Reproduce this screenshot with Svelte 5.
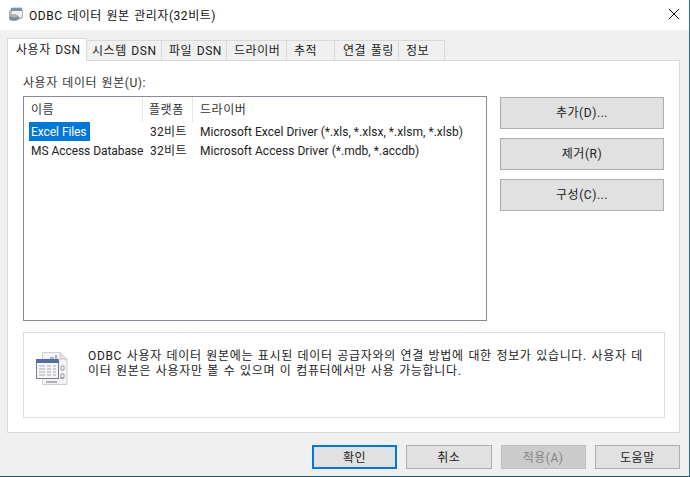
<script lang="ts">
	const tabs = [
		{ label: '사용자 DSN', w: 80, pad: 8 },
		{ label: '시스템 DSN', w: 75, pad: 5 },
		{ label: '파일 DSN', w: 65, pad: 7 },
		{ label: '드라이버', w: 60, pad: 7 },
		{ label: '추적', w: 48, pad: 7 },
		{ label: '연결 풀링', w: 64, pad: 8 },
		{ label: '정보', w: 46, pad: 7 }
	];
	const rows = [
		{ name: 'Excel Files', bits: '32비트', driver: 'Microsoft Excel Driver (*.xls, *.xlsx, *.xlsm, *.xlsb)', selected: true },
		{ name: 'MS Access Database', bits: '32비트', driver: 'Microsoft Access Driver (*.mdb, *.accdb)', selected: false }
	];
	const footer = [
		{ label: '확인', cls: 'primary' },
		{ label: '취소', cls: '' },
		{ label: '적용(A)', cls: 'disabled' },
		{ label: '도움말', cls: '' }
	];
</script>

<div class="window">
	<div class="titlebar">
		<svg class="appicon" width="16" height="16" viewBox="0 0 16 16">
			<path d="M1 5 L4 1.5 H14 L15 5 V12 L8 15 H2 L1 13 Z" fill="#b4b9bd" />
			<rect x="3" y="2" width="11" height="3" fill="#7f95ab" />
			<rect x="4" y="5" width="10" height="6" fill="#eef0f2" />
			<ellipse cx="6" cy="11.5" rx="5" ry="3" fill="#7f878d" />
			<ellipse cx="6" cy="10" rx="4" ry="1.6" fill="#a9b0b5" />
		</svg>
		<span class="title">ODBC 데이터 원본 관리자(32비트)</span>
		<svg class="close" width="10" height="10" viewBox="0 0 10 10">
			<path d="M0 0 L10 10 M10 0 L0 10" stroke="#111" stroke-width="1" fill="none" />
		</svg>
	</div>

	<div class="body">
		<div class="tabs">
			{#each tabs as tab, i}
				<div class="tab" class:active={i === 0} style="width: {tab.w}px; padding-left: {tab.pad}px">{tab.label}</div>
			{/each}
		</div>

		<div class="panel">
			<div class="label">사용자 데이터 원본(U):</div>
			<div class="main">
				<div class="list">
					<div class="head">
						<div class="col c1">이름</div>
						<div class="col c2">플랫폼</div>
						<div class="col c3">드라이버</div>
					</div>
					{#each rows as row}
						<div class="row">
							<div class="c1"><span class="name" class:selected={row.selected}>{row.name}</span></div>
							<div class="c2 cell">{row.bits}</div>
							<div class="c3 cell">{row.driver}</div>
						</div>
					{/each}
				</div>
				<div class="side">
					<div class="btn">추가(D)...</div>
					<div class="btn">제거(R)</div>
					<div class="btn">구성(C)...</div>
				</div>
			</div>
			<div class="info">
				<svg class="infoicon" width="32" height="34" viewBox="0 0 32 34">
					<path d="M6.5 0.5 H24 L31 7 V32.5 H6.5 Z" fill="#f3f3f5" stroke="#d0d0d4" />
					<path d="M24 0.5 V7 H31" fill="#e2e2e6" stroke="#c6c6cc" />
					<path d="M14 6 H18 M20 3 V7 M24 26 H28 M10 30 H21" stroke="#9a9aa2" stroke-width="1.5" />
					<path d="M25 14 H28 V18 H25 Z M25 22 H28 V26 H25 Z" fill="none" stroke="#9a9eaa" />
					<rect x="0.5" y="7.5" width="22" height="19" fill="#f6f6f8" stroke="#787c88" />
					<rect x="0" y="7" width="23" height="4" fill="#4f6fa8" />
					<path d="M3 14 H9 M11 14 H15 M17 14 H20 M3 17 H9 M11 17 H15 M17 17 H20 M3 20 H9 M11 20 H15 M17 20 H20 M3 23 H9 M11 23 H15 M17 23 H20" stroke="#a4a8b2" />
				</svg>
				<p>ODBC 사용자 데이터 원본에는 표시된 데이터 공급자와의 연결 방법에 대한 정보가 있습니다. 사용자 데이터 원본은 사용자만 볼 수 있으며 이 컴퓨터에서만 사용 가능합니다.</p>
			</div>
		</div>

		<div class="footer">
			{#each footer as b}
				<div class="btn small {b.cls}">{b.label}</div>
			{/each}
		</div>
	</div>
</div>

<style>
	:global(body) {
		margin: 0;
		background: #f0f0f0;
	}

	.window {
		width: 690px;
		height: 477px;
		box-sizing: border-box;
		display: flex;
		flex-direction: column;
		border-right: 1px solid #2f6f8a;
		border-bottom: 1px solid #17566e;
		font-family: Roboto, 'Noto Sans CJK KR', sans-serif;
		font-size: 12px;
		letter-spacing: 0.55px;
		word-spacing: 1px;
		color: #1a1a1a;
		background: #f0f0f0;
		overflow: hidden;
	}

	.titlebar {
		box-sizing: border-box;
		height: 30px;
		flex: none;
		background: #fff;
		display: flex;
		align-items: center;
		padding: 0 10px 2px 8px;
	}

	.appicon {
		margin-right: 5px;
	}

	.title {
		flex: 1;
		color: #111;
	}

	.body {
		flex: 1;
		display: flex;
		flex-direction: column;
		padding: 8px 9px 0 7px;
		min-height: 0;
	}

	.tabs {
		display: flex;
		align-items: flex-end;
		height: 22px;
		flex: none;
		position: relative;
		z-index: 1;
	}

	.tab {
		box-sizing: border-box;
		height: 20px;
		border: 1px solid #d9d9d9;
		border-left: none;
		border-bottom: none;
		background: #f0f0f0;
		line-height: 21px;
		color: #1a1a1a;
		white-space: nowrap;
	}

	.tab.active {
		height: 23px;
		margin-bottom: -1px;
		background: #fff;
		border-left: 1px solid #d9d9d9;
		line-height: 22px;
	}

	.panel {
		box-sizing: border-box;
		height: 373px;
		flex: none;
		background: #fff;
		border: 1px solid #d9d9d9;
		padding: 15px 14px 15px 15px;
	}

	.label {
		line-height: 14px;
		height: 20px;
		color: #333;
	}

	.main {
		display: flex;
		height: 225px;
		margin-bottom: 11px;
	}

	.list {
		box-sizing: border-box;
		width: 464px;
		height: 225px;
		border: 1px solid #8a8a96;
		margin-right: 13px;
		padding-left: 6px;
	}

	.head {
		display: flex;
		height: 25px;
		line-height: 26px;
		color: #333;
	}

	.col {
		box-sizing: border-box;
		border-right: 1px solid #e5e5e5;
	}

	.col.c3 {
		border-right: none;
	}

	.head .c1 {
		padding-left: 1px;
	}

	.c1 {
		width: 113px;
		flex: none;
	}

	.c2 {
		width: 50px;
		flex: none;
		padding-left: 6px;
		box-sizing: border-box;
	}

	.c3 {
		flex: 1;
	}

	.head .c2 {
		padding-left: 6px;
	}

	.head .c3 {
		padding-left: 7px;
	}

	.row {
		display: flex;
		height: 19px;
		line-height: 21px;
		color: #222;
	}

	.cell.c3 {
		padding-left: 7px;
		letter-spacing: 0.04px;
		word-spacing: 0;
	}

	.cell.c2 {
		letter-spacing: 0.3px;
		padding-left: 7px;
	}

	.name {
		display: block;
		width: fit-content;
		height: 19px;
		white-space: nowrap;
		padding: 0 4px 0 2px;
		margin-left: -1px;
		letter-spacing: -0.1px;
		word-spacing: 0.3px;
	}

	.name.selected {
		background: #0078d7;
		color: #fff;
	}

	.side {
		display: flex;
		flex-direction: column;
		gap: 9px;
		padding-top: 1px;
	}

	.btn {
		box-sizing: border-box;
		width: 164px;
		height: 32px;
		line-height: 31px;
		background: #e1e1e1;
		border: 1px solid #adadad;
		text-align: center;
		color: #222;
	}

	.info {
		box-sizing: border-box;
		width: 642px;
		height: 86px;
		border: 1px solid #dcdcdc;
		display: flex;
		padding: 16px 16px 0 12px;
	}

	.infoicon {
		flex: none;
		margin: 3px 20px 0 0;
	}

	.info p {
		margin: 0;
		width: 556px;
		line-height: 15px;
		letter-spacing: 0.67px;
		word-break: break-all;
		color: #222;
	}

	.footer {
		display: flex;
		gap: 9px;
		padding: 12px 0 0 305px;
	}

	.btn.small {
		width: 85.67px;
		height: 24px;
		line-height: 25px;
	}

	.btn.primary {
		border: 2px solid #0078d7;
		line-height: 23px;
	}

	.btn.disabled {
		background: #cccccc;
		border-color: #bfbfbf;
		color: #838383;
	}
</style>
